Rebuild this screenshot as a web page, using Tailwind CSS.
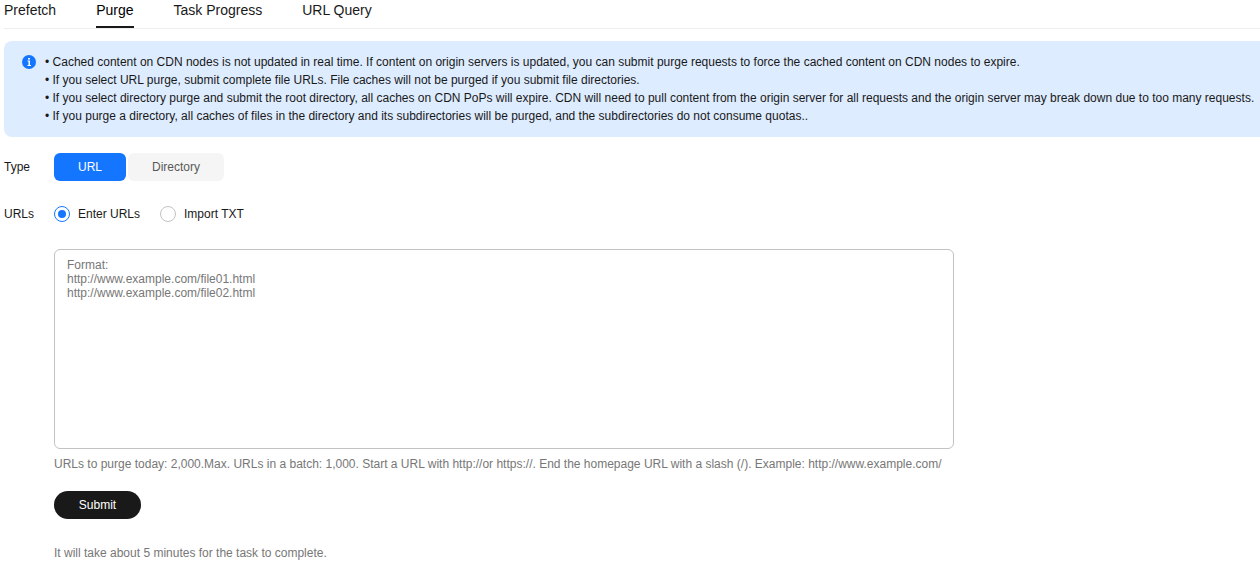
<!DOCTYPE html>
<html lang="en">

<head>
    <meta charset="UTF-8">
    <meta name="viewport" content="width=device-width, initial-scale=1">
    <title>Purge</title>
    <script src="https://cdn.jsdelivr.net/npm/@tailwindcss/browser@4"></script>
</head>

<body class="bg-white text-[#191919] font-['Liberation_Sans',Arial,sans-serif] text-xs overflow-x-hidden">
    <!-- Tabs -->
    <nav class="ml-1 flex gap-10 border-b border-[#eeeeee] text-sm leading-5">
        <a href="#prefetch" class="h-7">Prefetch</a>
        <a href="#purge" class="h-7 border-b-2 border-[#191919] text-black">Purge</a>
        <a href="#progress" class="h-7">Task Progress</a>
        <a href="#query" class="h-7">URL Query</a>
    </nav>

    <!-- Notice -->
    <div class="ml-1 mt-3 flex gap-[9px] rounded-l-lg bg-[#deecff] py-3 pl-[18px]">
        <svg class="mt-[2px] size-[14px] shrink-0" viewBox="0 0 14 14">
            <circle cx="7" cy="7" r="7" fill="#1476ff"></circle>
            <path d="M6 3h2v1.5H6zM5.5 5.5H8V10h1v1H5.5v-1h1V6.5h-1z" fill="#fff"></path>
        </svg>
        <div class="whitespace-nowrap leading-[18px]">
            <p>• Cached content on CDN nodes is not updated in real time. If content on origin servers is updated, you can submit purge requests to force the cached content on CDN nodes to expire.</p>
            <p>• If you select URL purge, submit complete file URLs. File caches will not be purged if you submit file directories.</p>
            <p>• If you select directory purge and submit the root directory, all caches on CDN PoPs will expire. CDN will need to pull content from the origin server for all requests and the origin server may break down due to too many requests.</p>
            <p>• If you purge a directory, all caches of files in the directory and its subdirectories will be purged, and the subdirectories do not consume quotas..</p>
        </div>
    </div>

    <form class="mt-4 pl-1">
        <div class="flex items-center" role="group" aria-labelledby="typeLabel">
            <span id="typeLabel" class="w-[50px]">Type</span>
            <div class="flex gap-[2px]">
                <button type="button" class="h-7 w-[72px] rounded-md bg-[#1476ff] text-white">URL</button>
                <button type="button" class="h-7 w-24 rounded-md bg-[#f5f5f5] text-[#595959]">Directory</button>
            </div>
        </div>

        <div class="mt-6 flex items-center" role="radiogroup" aria-labelledby="urlsLabel">
            <span id="urlsLabel" class="w-[50px]">URLs</span>
            <div class="flex gap-5 leading-[18px]">
                <label class="flex items-center gap-2">
                    <input type="radio" name="source" checked class="size-4 appearance-none rounded-full border border-[#c2c2c2] checked:border-[#1476ff] checked:bg-[#1476ff] checked:bg-clip-content checked:p-[3px]">
                    Enter URLs
                </label>
                <label class="flex items-center gap-2">
                    <input type="radio" name="source" class="size-4 appearance-none rounded-full border border-[#c2c2c2]">
                    Import TXT
                </label>
            </div>
        </div>

        <div class="ml-[50px] mt-[26px] text-[#777777]">
            <textarea aria-labelledby="urlsLabel" class="block h-[200px] w-full max-w-[900px] resize-none rounded-md border border-[#c2c2c2] px-3 py-2 leading-[14px] placeholder:text-[#777777]" placeholder="Format:&#10;http://www.example.com/file01.html&#10;http://www.example.com/file02.html"></textarea>
            <p class="mt-[6px] leading-[18px]">URLs to purge today: 2,000.Max. URLs in a batch: 1,000. Start a URL with http://or https://. End the homepage URL with a slash (/). Example: http://www.example.com/</p>
            <button type="button" class="mt-[18px] h-7 w-[87px] rounded-full bg-[#191919] text-white">Submit</button>
            <p class="mt-[25px] leading-[18px]">It will take about 5 minutes for the task to complete.</p>
        </div>
    </form>
</body>

</html>
